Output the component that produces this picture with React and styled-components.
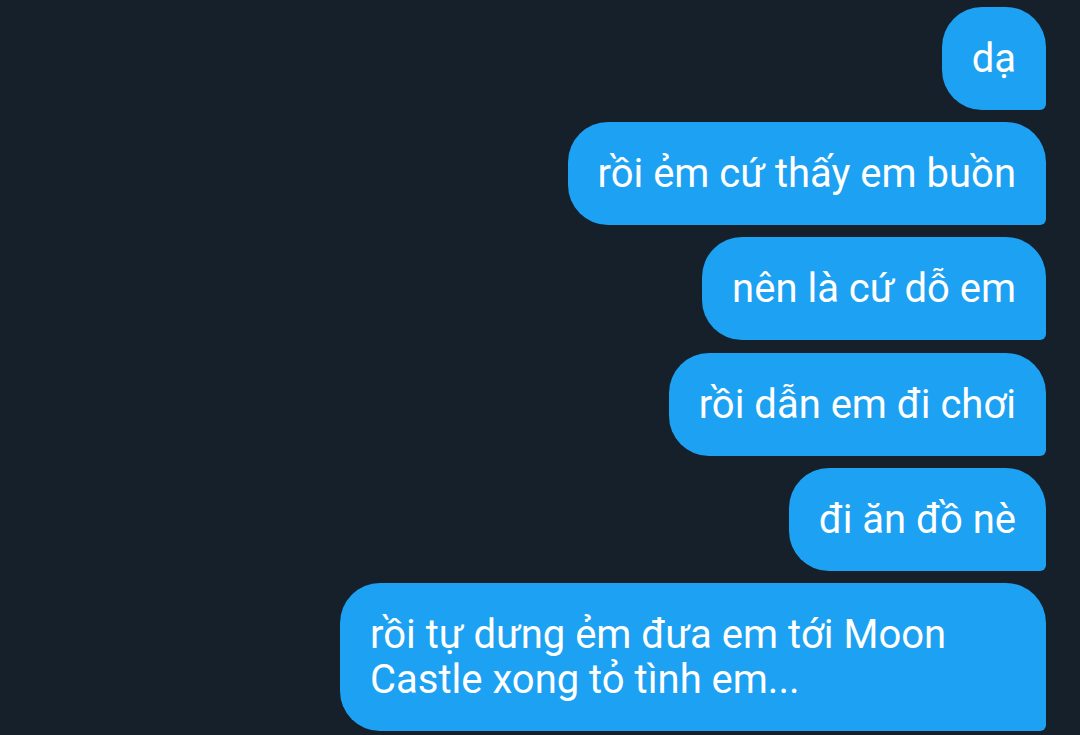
import React from "react";
import styled, { createGlobalStyle } from "styled-components";

const Global = createGlobalStyle`
  html, body {
    margin: 0;
    padding: 0;
    background: #15202b;
  }
  body {
    font-family: Roboto, "Noto Sans", sans-serif;
  }
`;

const Thread = styled.div`
  display: flex;
  flex-direction: column;
  align-items: flex-end;
  gap: 12.2px;
  padding: 7px 34px 0 0;
  min-height: 735px;
  box-sizing: border-box;
  background: #15202b;
  overflow: hidden;
`;

const Bubble = styled.div`
  box-sizing: border-box;
  max-width: 706px;
  padding: 29px 30px;
  background: #1da1f2;
  color: #ffffff;
  font-size: 40px;
  line-height: 45px;
  border-radius: 40px 40px 6px 40px;
  white-space: normal;
`;

const messages = [
  "dạ",
  "rồi ẻm cứ thấy em buồn",
  "nên là cứ dỗ em",
  "rồi dẫn em đi chơi",
  "đi ăn đồ nè",
  "rồi tự dưng ẻm đưa em tới Moon Castle xong tỏ tình em...",
];

export default function App() {
  return (
    <>
      <Global />
      <Thread>
        {messages.map((m, i) => (
          <Bubble key={i}>{m}</Bubble>
        ))}
      </Thread>
    </>
  );
}
